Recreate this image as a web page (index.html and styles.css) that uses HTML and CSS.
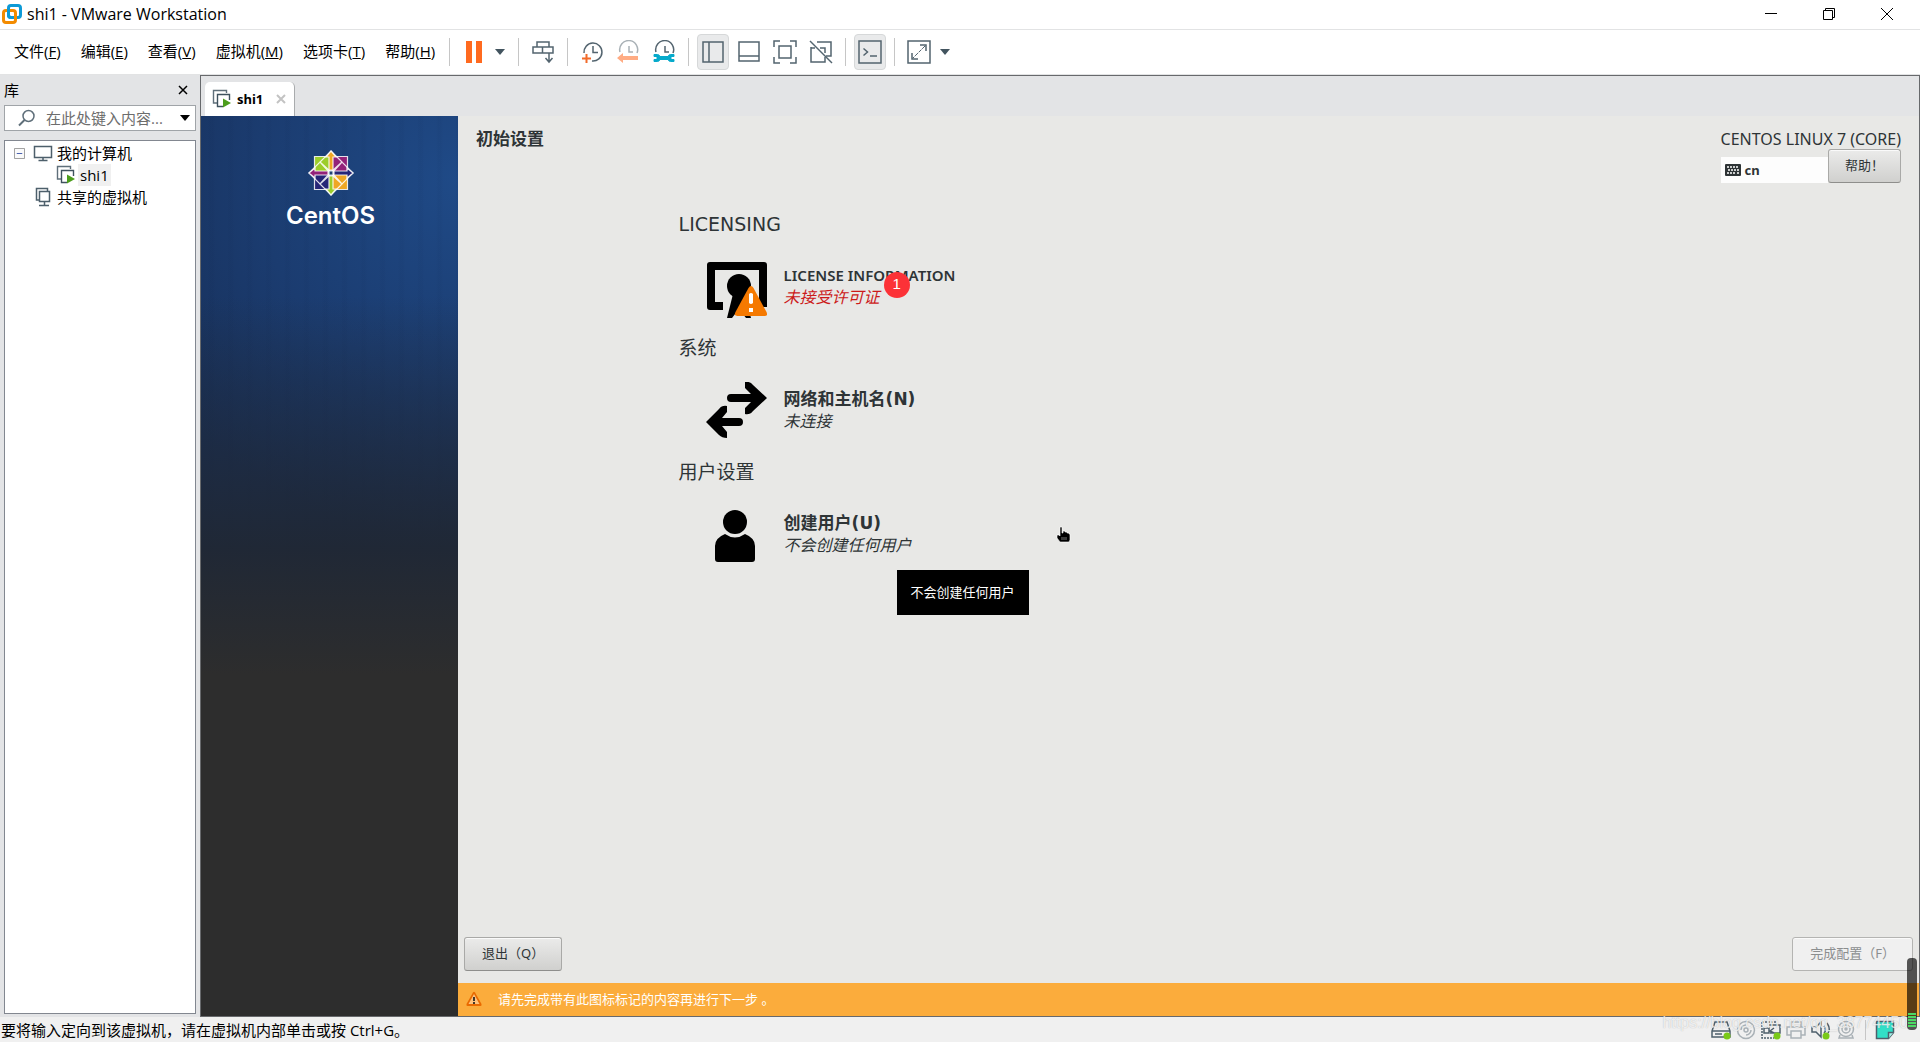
FILE: index.html
```html
<!DOCTYPE html>
<html lang="zh-CN">

<head>
    <meta charset="UTF-8">
    <meta name="viewport" content="width=device-width, initial-scale=1.0">
    <title>shi1 - VMware Workstation</title>
    <link rel="stylesheet" href="styles.css">
</head>

<body>

    <!-- shared icons -->
    <svg class="defs" width="0" height="0" aria-hidden="true">
        <symbol id="vm" viewBox="0 0 20 20">
            <path d="M5 14H1.5V1.5h13V4" fill="none" stroke="#5f6f7a" stroke-width="1.4"/>
            <path d="M11 17.5H5.5v-12h12V11" fill="none" stroke="#3f525e" stroke-width="1.4"/>
            <path d="M11 9.500l8 4.500-8 4.500z" fill="#4c9d1c"/>
        </symbol>
        <symbol id="caret" viewBox="0 0 10 6">
            <path d="M0 0h10L5 6z" fill="currentColor"/>
        </symbol>
    </svg>

    <header class="titlebar">
        <svg class="app-logo" viewBox="0 0 20 20">
            <rect x="6.500" y="1.500" width="12" height="12" rx="2.500" fill="none" stroke="#0d9ad6" stroke-width="3"/>
            <rect x="1.500" y="6.500" width="12" height="12" rx="2.500" fill="none" stroke="#f38b00" stroke-width="3"/>
            <path d="M6.500 5v6a2.500 2.500 0 0 0 2 2.500" fill="none" stroke="#0d9ad6" stroke-width="3"/>
        </svg>
        <h1>shi1 - VMware Workstation</h1>
        <div class="window-buttons">
            <button aria-label="最小化"><svg viewBox="0 0 12 12"><path d="M0 5.500h12"/></svg></button>
            <button aria-label="还原"><svg viewBox="0 0 12 12"><path d="M.5 2.500h9v9h-9zM2.500 2.500v-2h9v9h-2"/></svg></button>
            <button aria-label="关闭"><svg viewBox="0 0 12 12"><path d="M0 0l12 12M12 0L0 12"/></svg></button>
        </div>
    </header>

    <div class="menubar">
        <nav class="menu">
            <button>文件(<u>F</u>)</button>
            <button>编辑(<u>E</u>)</button>
            <button>查看(<u>V</u>)</button>
            <button>虚拟机(<u>M</u>)</button>
            <button>选项卡(<u>T</u>)</button>
            <button>帮助(<u>H</u>)</button>
        </nav>
        <div class="toolbar">
            <span class="sep"></span>
            <div class="split">
                <button class="tool" aria-label="挂起"><svg viewBox="0 0 24 24"><path d="M4 1h6v22H4zM14 1h6v22h-6z" fill="#ff6a1f" stroke="none"/></svg></button>
                <button class="drop" aria-label="电源选项"><svg><use href="#caret"/></svg></button>
            </div>
            <span class="sep"></span>
            <button class="tool" aria-label="发送 Ctrl+Alt+Del"><svg viewBox="0 0 24 24"><path d="M6 2h12v5H6zM2 7h9.500v6H2zM11.500 7H22v6H11.500zM18 13v8M14.500 18l3.500 4 3.500-4"/></svg></button>
            <span class="sep"></span>
            <button class="tool" aria-label="拍摄快照"><svg viewBox="0 0 24 24"><path d="M4 13a9 9 0 1 1 8 8M13 6v6.500h5"/><path d="M2 18.500h9M6.500 14v9" stroke="#f26b2b" stroke-width="2"/></svg></button>
            <button class="tool" aria-label="恢复快照"><svg viewBox="0 0 24 24"><path d="M4 12a9 9 0 1 1 17 1M13 6v6h4" stroke="#a9b1b6"/><path d="M1 18l6-5v3h15v4H7v3z" fill="#ffac84" stroke="none"/></svg></button>
            <button class="tool" aria-label="管理快照"><svg viewBox="0 0 24 24"><path d="M4 12a9 9 0 1 1 17 1M13 6v6h4"/><path d="M2 14.500h3.500a3 3 0 0 1 2.500 2h8a3 3 0 0 1 2.500-2H22v2h-3v3h3v2h-3.500a3 3 0 0 1-2.500-2H8a3 3 0 0 1-2.500 2H2v-2h3v-3H2z" fill="#06aacb" stroke="#06aacb" stroke-width="1"/></svg></button>
            <span class="sep"></span>
            <button class="tool on" aria-label="显示库"><svg viewBox="0 0 24 24"><path d="M2 2h20v20H2zM8 2v20"/></svg></button>
            <button class="tool" aria-label="显示缩略图栏"><svg viewBox="0 0 24 24"><path d="M2 2h20v19H2zM2 16h20"/></svg></button>
            <button class="tool" aria-label="全屏"><svg viewBox="0 0 24 24"><path d="M1 7V1h6M17 1h6v6M23 17v6h-6M7 23H1v-6M6 6h12v12H6z"/></svg></button>
            <button class="tool" aria-label="Unity"><svg viewBox="0 0 24 24"><path d="M8 2h14v14h-5M2 7v15h14v-5M2 8h4M11 8h5v5"/><path d="M1 1l22 22"/></svg></button>
            <span class="sep"></span>
            <button class="tool on" aria-label="控制台视图"><svg viewBox="0 0 24 24"><path d="M1 1h22v22H1zM5.500 8.500l4 3.500-4 3.500M12 16h7"/></svg></button>
            <span class="sep"></span>
            <div class="split">
                <button class="tool" aria-label="自由拉伸"><svg viewBox="0 0 24 24"><path d="M1 1h22v22H1zM13 5h6v6M5 13v6h6"/><path d="M18 6l-12 12" stroke-dasharray="4 1" stroke-width="1"/></svg></button>
                <button class="drop" aria-label="拉伸选项"><svg><use href="#caret"/></svg></button>
            </div>
        </div>
    </div>

    <div class="workspace">
        <aside class="library">
            <div class="library-head">
                <h2>库</h2>
                <button aria-label="关闭库"><svg viewBox="0 0 10 10"><path d="M1 1l8 8M9 1L1 9" stroke="#000" stroke-width="1.500"/></svg></button>
            </div>
            <div class="search">
                <svg class="lens" viewBox="0 0 18 18"><circle cx="10.500" cy="7" r="5.500" fill="none" stroke="#5f6f7a" stroke-width="1.500"/><path d="M6.500 11L1 16.500" stroke="#5f6f7a" stroke-width="2"/></svg>
                <input type="text" placeholder="在此处键入内容..." aria-label="搜索">
                <button aria-label="搜索选项"><svg><use href="#caret"/></svg></button>
            </div>
            <ul class="tree">
                <li class="level-0">
                    <svg class="toggle" viewBox="0 0 12 12"><path d="M.5.5h11v11H.5z" fill="#fafafa" stroke="#959595"/><path d="M3 6h6" stroke="#3a54a8"/></svg>
                    <svg class="node" viewBox="0 0 20 20"><path d="M1.500 3.500h17v11h-17zM10 14.500v3M5.500 17.500h9" fill="none" stroke="#4d5f6b" stroke-width="1.500"/></svg>
                    <span>我的计算机</span>
                </li>
                <li class="level-1">
                    <svg class="node"><use href="#vm"/></svg>
                    <span class="current">shi1</span>
                </li>
                <li class="level-2">
                    <svg class="node" viewBox="0 0 20 20"><path d="M6 13H3.500V1.500h11V4M6.500 4.500h10v10h-10zM11.500 14.500v4M6 18.500h10" fill="none" stroke="#4d5f6b" stroke-width="1.500"/></svg>
                    <span>共享的虚拟机</span>
                </li>
            </ul>
        </aside>

        <main class="console">
            <div class="tabs">
                <div class="tab">
                    <svg class="node"><use href="#vm"/></svg>
                    <span>shi1</span>
                    <button aria-label="关闭选项卡"><svg viewBox="0 0 10 10"><path d="M1 1l8 8M9 1L1 9" stroke="#c3c3c3" stroke-width="2"/></svg></button>
                </div>
            </div>

            <div class="guest">
                <div class="brand">
                    <svg class="centos" viewBox="-23 -23 46 46" stroke="#fff" stroke-opacity=".85" stroke-width="1.200">
                        <path d="M-16.500-16.500H-1V-1h-15.500z" fill="#9ccd2a"/>
                        <path d="M1-16.500h15.500V-1H1z" fill="#932279"/>
                        <path d="M1 1h15.500v15.500H1z" fill="#efa724"/>
                        <path d="M-16.500 1H-1v15.500h-15.500z" fill="#262577"/>
                        <path d="M0-22L11-11 0-1-11-11zM0 22L11 11 0 1-11 11zM-22 0L-11-11-1 0-11 11zM22 0L11-11 1 0 11 11z" fill="none"/>
                        <path d="M0-22l5 6H2v13h-4v-13h-3z" fill="#efa724"/>
                        <path d="M22 0l-6 5V2H3v-4h13v-3z" fill="#262577"/>
                        <path d="M0 22l-5-6h3V3h4v13h3z" fill="#9ccd2a"/>
                        <path d="M-22 0l6-5v3h13v4h-13v3z" fill="#932279"/>
                        <path d="M-2-2h4v4h-4z" fill="#1f4273"/>
                    </svg>
                    <p>CentOS</p>
                </div>

                <div class="setup">
                    <header class="setup-head">
                        <h2>初始设置</h2>
                        <div class="setup-tools">
                            <p>CENTOS LINUX 7 (CORE)</p>
                            <div class="tools-row">
                                <button class="layout">
                                    <svg viewBox="0 0 16 12"><rect width="16" height="12" rx="1" fill="#2e3436"/><path d="M2 3h12M3 6h11M2 9h2M5 9h6M12 9h2" stroke="#fff" stroke-width="1.500" stroke-dasharray="2 1"/></svg>
                                    cn
                                </button>
                                <button class="gtk help">帮助！</button>
                            </div>
                        </div>
                    </header>

                    <div class="hub">
                        <section>
                            <h3>LICENSING</h3>
                            <div class="spoke-wrap">
                                <button class="spoke">
                                    <svg viewBox="0 0 62 64">
                                        <path d="M5 4h54a3 3 0 0 1 3 3v42H54V12H10v32h8v8H5a3 3 0 0 1-3-3V7a3 3 0 0 1 3-3z"/>
                                        <circle cx="34" cy="28" r="12"/>
                                        <path d="M28 36h12l6 24h-5l-7-9-7 9h-5z"/>
                                        <path d="M43.500 30q2.500-4 5 0L61.500 54q2 4-2 4h-27q-4 0-2-4z" fill="#f57900"/>
                                        <path d="M44 36q2-2 4 0v9q-2 2-4 0zM44 50h4v4h-4z" fill="#fff"/>
                                    </svg>
                                    <span class="label">
                                        <strong class="latin">LICENSE INFORMATION</strong>
                                        <em class="error">未接受许可证</em>
                                    </span>
                                </button>
                                <span class="badge">1</span>
                            </div>
                        </section>

                        <section>
                            <h3>系统</h3>
                            <div class="spoke-wrap">
                                <button class="spoke">
                                    <svg viewBox="0 0 62 64">
                                        <path d="M26 12h20L40 6V0q5-1 8 3l14 13-14 13q-3 4-8 3v-6l6-6H26a4 4 0 0 1 0-8z"/>
                                        <path d="M34 44H17l5 6v6q-5 0-8-3L1 40l13-13q3-4 8-3v6l-5 6h17a4 4 0 0 1 0 8z"/>
                                    </svg>
                                    <span class="label">
                                        <strong>网络和主机名(N)</strong>
                                        <em>未连接</em>
                                    </span>
                                </button>
                            </div>
                        </section>

                        <section>
                            <h3>用户设置</h3>
                            <div class="spoke-wrap">
                                <button class="spoke">
                                    <svg viewBox="0 0 62 64">
                                        <circle cx="30" cy="16" r="12"/>
                                        <path d="M10 40q0-8 10-12 10 7 20 0 10 4 10 12v13q0 3-3 3H13q-3 0-3-3z"/>
                                    </svg>
                                    <span class="label">
                                        <strong>创建用户(U)</strong>
                                        <em>不会创建任何用户</em>
                                    </span>
                                </button>
                                <div class="tooltip" role="tooltip">不会创建任何用户</div>
                                <svg class="pointer" viewBox="0 0 16 18"><path d="M4 1h2v6h1V5h2v1h2v1h2v1h1v6l-1 2H4l-3-4V9h2l1 1z" fill="#000" stroke="#fff" stroke-width=".6"/><path d="M6 11v3M8 11v3M10 11v3" stroke="#777"/></svg>
                            </div>
                        </section>
                    </div>

                    <div class="actions">
                        <button class="gtk">退出（Q）</button>
                        <button class="gtk" disabled>完成配置（F）</button>
                    </div>
                    <div class="notice">
                        <svg viewBox="0 0 16 16"><path d="M7 1.500q1-1.500 2 0L15.500 13q.5 2-1 2h-13q-1.500 0-1-2z" fill="#e96a00"/><path d="M8 3l5.500 10h-11z" fill="#ffc27d"/><path d="M7 6h2v4H7zM7 11h2v2H7z" fill="#43382c"/></svg>
                        <p>请先完成带有此图标标记的内容再进行下一步 。</p>
                    </div>
                </div>
            </div>
        </main>
    </div>

    <footer class="statusbar">
        <p>要将输入定向到该虚拟机，请在虚拟机内部单击或按 Ctrl+G。</p>
        <div class="devices">
            <svg viewBox="0 0 20 20"><path d="M4 2h12l3 9v6H1v-6zM1 11h18M4 14h7"/><circle class="active" cx="16" cy="16" r="3.500"/></svg>
            <svg class="off" viewBox="0 0 20 20"><circle cx="10" cy="10" r="8.500"/><circle cx="10" cy="10" r="2"/><path d="M5 10a5 5 0 0 1 5-5M15 10a5 5 0 0 1-5 5"/></svg>
            <svg viewBox="0 0 20 20"><path d="M1 2h14M1 2v16h12" stroke-dasharray="2 1"/><path d="M8 5h11v8H9M13 8l-4 3 4 2M3 8h5v5H3z"/><circle class="active" cx="16" cy="16" r="3.500"/></svg>
            <svg class="off" viewBox="0 0 20 20"><path d="M5 7V2h10v5M5 15H1V7h18v8h-4M5 11h10v7H5z"/></svg>
            <svg viewBox="0 0 20 20"><path d="M1 7h4l5-5v15l-5-5H1zM13 6q3 4 0 7M16 3q4 6 1 10"/><circle class="active" cx="15" cy="16" r="3.500"/></svg>
            <svg class="off" viewBox="0 0 20 20"><circle cx="10" cy="9" r="7.500"/><circle cx="10" cy="9" r="4"/><circle cx="10" cy="9" r="1"/><path d="M4 15l-1 3h14l-1-3"/></svg>
            <span class="sep"></span>
            <svg viewBox="0 0 20 20"><path d="M1.500 1.500h17v11l-5 6h-12z" fill="#31dfc7"/><path d="M18.500 12.500h-5v6" fill="#a5f2e7"/></svg>
        </div>
        <span class="watermark">https://blog.csdn.net/qq_38774450</span>
        <svg class="meter" viewBox="0 0 10 72"><rect width="10" height="72" rx="4" fill="#000" fill-opacity=".65"/><path d="M5 55v15" stroke="#4cd964" stroke-width="8" stroke-dasharray="2 1"/></svg>
    </footer>

</body>

</html>
```

FILE: styles.css
```css
* {
    box-sizing: border-box;
}

body {
    display: flex;
    flex-direction: column;
    min-height: 100vh;
    margin: 0;
    font-family: "Open Sans", "Noto Sans CJK SC", sans-serif;
    font-size: 15px;
    line-height: 22px;
    color: #000;
    background-color: #fff;
}

h1,
h2,
h3,
p,
ul {
    margin: 0;
    padding: 0;
    font-size: inherit;
    font-weight: normal;
}

button {
    margin: 0;
    padding: 0;
    border: 0;
    font: inherit;
    color: inherit;
    background: none;
}

svg {
    display: block;
    flex: none;
}

.defs {
    position: absolute;
}

/* title bar */
.titlebar {
    display: flex;
    align-items: center;
    height: 30px;
    padding: 0 4px 2px 2px;
    border-bottom: 1px solid #e2e3e4;
}

.app-logo {
    width: 20px;
    height: 20px;
}

.titlebar h1 {
    flex: 1;
    margin-left: 5px;
    font-size: 16px;
}

.window-buttons {
    display: flex;
}

.window-buttons button {
    display: flex;
    justify-content: center;
    width: 58px;
    padding: 8px 0;
}

.window-buttons svg {
    width: 12px;
    height: 12px;
    fill: none;
    stroke: #000;
}

/* menu and toolbar */
.menubar {
    display: flex;
    align-items: center;
    height: 45px;
    padding-left: 4px;
    border-bottom: 1px solid #e2e3e4;
}

.menu,
.toolbar,
.split {
    display: flex;
    align-items: center;
}

.menu button {
    padding: 0 10px 2px;
}

.toolbar {
    gap: 4px;
}

.sep {
    width: 1px;
    height: 28px;
    margin: 0 4px;
    background-color: #c6c6c6;
}

.tool {
    display: flex;
    align-items: center;
    justify-content: center;
    width: 32px;
    height: 36px;
    border: 1px solid transparent;
    border-radius: 4px;
}

.tool.on {
    border-color: #d6d8d9;
    background-color: #e9eaeb;
}

.tool svg {
    width: 24px;
    height: 24px;
    fill: none;
    stroke: #53646f;
    stroke-width: 1.5px;
}

.drop {
    display: flex;
    justify-content: center;
    width: 20px;
    color: #42545f;
}

.drop svg,
.search button svg {
    width: 10px;
    height: 6px;
}

/* library */
.workspace {
    display: flex;
    flex: 1;
    background-color: #e3e4e6;
}

.library {
    display: flex;
    flex-direction: column;
    width: 200px;
    padding: 0 4px 3px;
}

.library-head {
    display: flex;
    align-items: center;
    justify-content: space-between;
    height: 30px;
    padding-right: 8px;
}

.library-head svg {
    width: 10px;
    height: 10px;
}

.search {
    display: flex;
    align-items: center;
    height: 26px;
    padding: 0 5px 0 13px;
    border: 1px solid #a0a4a8;
    background-color: #fff;
}

.lens {
    width: 18px;
    height: 18px;
}

.search input {
    flex: 1;
    min-width: 0;
    margin-left: 10px;
    padding: 0;
    border: 0;
    outline: 0;
    font: inherit;
    background: none;
}

.search input::placeholder {
    color: #6d6d6d;
}

.tree {
    flex: 1;
    margin-top: 9px;
    padding-top: 1px;
    border: 1px solid #828790;
    list-style: none;
    background-color: #fff;
}

.tree li {
    display: flex;
    align-items: center;
    height: 22px;
}

.tree span {
    margin-left: 2px;
    padding: 0 2px;
}

.level-0 {
    padding-left: 9px;
}

.level-1 {
    padding-left: 51px;
}

.level-2 {
    padding-left: 28px;
}

.toggle {
    width: 11px;
    height: 11px;
    margin-right: 8px;
}

.node {
    width: 20px;
    height: 20px;
}

.current {
    background-color: #f0f0f0;
}

/* console */
.console {
    display: flex;
    flex: 1;
    flex-direction: column;
    border: 1px solid #67696c;
}

.tabs {
    display: flex;
    align-items: flex-end;
    height: 40px;
    padding-left: 4px;
}

.tab {
    display: flex;
    align-items: center;
    height: 34px;
    padding: 0 8px 0 7px;
    border-right: 1px solid #a9abad;
    border-radius: 5px 5px 0 0;
    font-family: "Noto Sans", sans-serif;
    font-size: 13px;
    font-weight: bold;
    background-color: #fff;
}

.tab span {
    margin: 0 13px 0 5px;
}

.tab button svg {
    width: 10px;
    height: 10px;
}

.guest {
    display: flex;
    flex: 1;
}

.brand {
    display: flex;
    flex-direction: column;
    align-items: center;
    width: 257px;
    padding: 34px 0 0 2px;
    color: #fff;
    background:
        linear-gradient(to bottom, transparent 20%, rgba(32, 41, 56, 0.5) 34%, rgba(33, 39, 49, 0.88) 48%, #2d2d2d 62%),
        repeating-linear-gradient(to right, transparent 0 7px, rgba(10, 25, 60, 0.04) 9px 12px, transparent 14px 19px),
        radial-gradient(circle at 100% 7%, #1f4a87, #1b3c70 200px, #172f58 360px);
}

.centos {
    width: 46px;
    height: 46px;
}

.brand p {
    margin-top: 8px;
    font-family: Inter, sans-serif;
    font-size: 24px;
    font-weight: 600;
    line-height: 24px;
}

.setup {
    display: flex;
    flex: 1;
    flex-direction: column;
    font-family: "Noto Sans", "Noto Sans CJK SC", sans-serif;
    color: #2e3436;
    background-color: #e8e8e6;
}

.setup-head {
    display: flex;
    justify-content: space-between;
    padding: 13px 18px 0;
}

.setup-head h2 {
    font-size: 17px;
    font-weight: bold;
    line-height: 20px;
}

.setup-tools p {
    font-size: 16px;
    line-height: 20px;
}

.tools-row {
    display: flex;
    align-items: flex-end;
}

.layout {
    display: flex;
    flex: 1;
    align-items: center;
    gap: 4px;
    height: 26px;
    padding: 0 4px;
    font-size: 13px;
    font-weight: bold;
    background-color: #fdfdfd;
}

.layout svg {
    width: 16px;
    height: 12px;
}

.gtk {
    height: 34px;
    padding: 0 17px 2px;
    border: 1px solid #a9a9a7;
    border-bottom-color: #8e8e8c;
    border-radius: 3px;
    font-size: 13px;
    background-image: linear-gradient(#ebebea, #d0d0ce);
    box-shadow: inset 0 1px #fafafa;
}

.gtk:disabled {
    border-color: #b4b4b2;
    color: #8b8e8f;
    background: #f0f0f0;
}

.help {
    width: 73px;
    padding: 0 0 2px;
}

/* hub */
.hub {
    flex: 1;
    padding: 27px 0 0 15.1%;
}

.hub h3 {
    font-family: "DejaVu Sans", "Noto Sans CJK SC", sans-serif;
    font-size: 19px;
    line-height: 28px;
}

.spoke-wrap {
    position: relative;
    margin: 20px 0 12px 26px;
}

.spoke {
    display: flex;
    gap: 17px;
    height: 64px;
    text-align: left;
}

.spoke svg {
    width: 62px;
    height: 64px;
}

.label {
    display: flex;
    flex-direction: column;
    padding-top: 6px;
    font-size: 16px;
}

.label strong {
    font-family: "DejaVu Sans", "Noto Sans CJK SC", sans-serif;
    font-size: 17px;
    font-weight: 600;
}

.label .latin {
    font-family: "Noto Sans", sans-serif;
    font-size: 15px;
}

.error {
    color: #cc1a1a;
}

.badge {
    position: absolute;
    top: 14px;
    left: 179px;
    width: 26px;
    height: 26px;
    border-radius: 50%;
    font-family: "Liberation Sans", sans-serif;
    line-height: 24px;
    text-align: center;
    color: #fff;
    background-color: #fc3237;
}

.tooltip {
    position: absolute;
    top: 64px;
    left: 192px;
    padding: 11px 14px 12px;
    font-size: 13px;
    color: #fff;
    background-color: #000;
}

.pointer {
    position: absolute;
    top: 20px;
    left: 351px;
    width: 16px;
    height: 18px;
}

.actions {
    display: flex;
    justify-content: space-between;
    padding: 0 6px 12px;
}

.notice {
    display: flex;
    align-items: center;
    gap: 16px;
    height: 33px;
    padding: 0 8px 2px;
    font-size: 13px;
    color: #fff;
    background-color: #fbac3c;
}

.notice svg {
    width: 16px;
    height: 16px;
}

/* status bar */
.statusbar {
    position: relative;
    display: flex;
    align-items: center;
    justify-content: space-between;
    height: 25px;
    padding: 0 25px 0 1px;
    background-color: #f0f0f0;
}

.devices {
    display: flex;
    align-items: center;
    gap: 5px;
}

.devices svg {
    width: 20px;
    height: 20px;
    fill: none;
    stroke: #4d5f6b;
    stroke-width: 1.5px;
}

.devices .off {
    stroke: #a9b1b6;
}

.devices .active {
    fill: #7ac918;
    stroke: none;
}

.devices .sep {
    height: 20px;
}

.watermark {
    position: absolute;
    right: 12px;
    bottom: 8px;
    font-family: "Liberation Sans", sans-serif;
    font-size: 16px;
    color: rgba(255, 255, 255, 0.75);
    text-shadow: 0 0 1px rgba(120, 120, 120, 0.5);
}

.meter {
    position: absolute;
    right: 3px;
    bottom: 12px;
    width: 10px;
    height: 72px;
}
```
